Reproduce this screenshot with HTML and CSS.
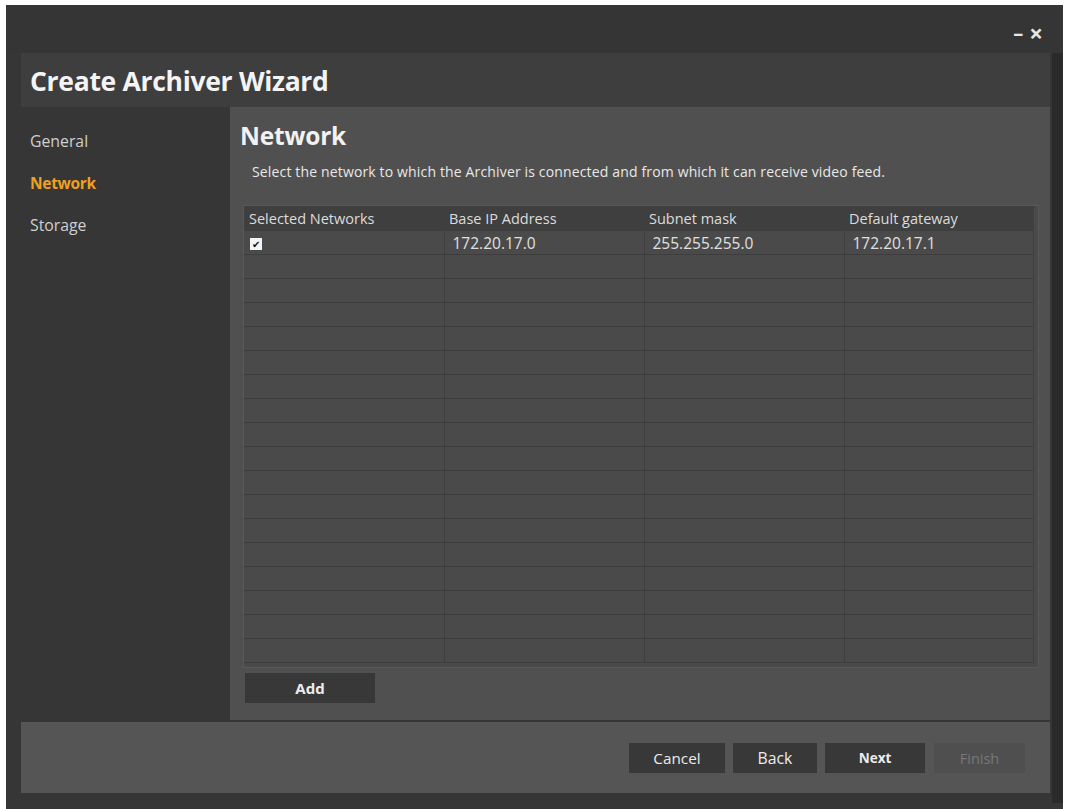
FILE: index.html
```html
<!doctype html>
<html>

	<head>
		<meta charset="utf-8">
		<title>Create Archiver Wizard</title>
		<link rel="stylesheet" href="styles.css">
	</head>

	<body>
		<div class="window">
			<!-- 标题栏 -->
			<div class="titlebar">
				<span class="ctl">&#8211;</span>
				<span class="ctl close">&#215;</span>
			</div>

			<div class="frame">
				<div class="inner">
					<div class="banner">Create Archiver Wizard</div>

					<div class="body">
						<ul class="steps">
							<li>General</li>
							<li class="active">Network</li>
							<li>Storage</li>
						</ul>

						<div class="panel">
							<h2>Network</h2>
							<p class="desc">Select the network to which the Archiver is connected and from which it can receive video feed.</p>

							<div class="grid">
								<table>
									<thead>
										<tr>
											<th>Selected Networks</th>
											<th>Base IP Address</th>
											<th>Subnet mask</th>
											<th>Default gateway</th>
										</tr>
									</thead>
									<tbody>
										<tr>
											<td><span class="check">&#10004;</span></td>
											<td>172.20.17.0</td>
											<td>255.255.255.0</td>
											<td>172.20.17.1</td>
										</tr>
										<tr><td></td><td></td><td></td><td></td></tr>
										<tr><td></td><td></td><td></td><td></td></tr>
										<tr><td></td><td></td><td></td><td></td></tr>
										<tr><td></td><td></td><td></td><td></td></tr>
										<tr><td></td><td></td><td></td><td></td></tr>
										<tr><td></td><td></td><td></td><td></td></tr>
										<tr><td></td><td></td><td></td><td></td></tr>
										<tr><td></td><td></td><td></td><td></td></tr>
										<tr><td></td><td></td><td></td><td></td></tr>
										<tr><td></td><td></td><td></td><td></td></tr>
										<tr><td></td><td></td><td></td><td></td></tr>
										<tr><td></td><td></td><td></td><td></td></tr>
										<tr><td></td><td></td><td></td><td></td></tr>
										<tr><td></td><td></td><td></td><td></td></tr>
										<tr><td></td><td></td><td></td><td></td></tr>
										<tr><td></td><td></td><td></td><td></td></tr>
										<tr><td></td><td></td><td></td><td></td></tr>
									</tbody>
								</table>
							</div>

							<button class="btn add">Add</button>
						</div>
					</div>

					<!-- 底部按钮 -->
					<div class="footer">
						<button class="btn cancel">Cancel</button>
						<button class="btn back">Back</button>
						<button class="btn next">Next</button>
						<button class="btn finish" disabled>Finish</button>
					</div>
				</div>
				<div class="scrollbar"></div>
			</div>
		</div>
	</body>

</html>
```

FILE: styles.css
```css
body {
	margin: 0;
	background: #fff;
	font-family: "Open Sans", "Liberation Sans", sans-serif;
}

.window {
	margin: 5px 0 0 6px;
	width: 1057px;
	height: 804px;
	background: #363636;
	display: flex;
	flex-direction: column;
}

.titlebar {
	height: 48px;
	display: flex;
	justify-content: flex-end;
	align-items: center;
	gap: 6px;
	padding: 8px 20px 0 0;
	box-sizing: border-box;
	background: #353535;
	color: #e6e6e6;
}

.ctl {
	font-size: 20px;
	font-weight: 700;
	line-height: 20px;
}

.close {
	font-size: 24px;
}

.frame {
	flex: 1;
	display: flex;
}

.inner {
	margin-left: 15px;
	width: 1029px;
	display: flex;
	flex-direction: column;
}

.scrollbar {
	width: 11px;
	margin-left: 2px;
	margin-bottom: 6px;
	background: #2a2a2a;
}

.banner {
	height: 54px;
	background: #3e3e3e;
	color: #f4f4f4;
	font-size: 26.5px;
	font-weight: 700;
	letter-spacing: -0.3px;
	line-height: 56px;
	padding-left: 9px;
}

.body {
	height: 613px;
	display: flex;
}

.steps {
	list-style: none;
	margin: 0;
	padding: 22px 0 0 9px;
	width: 200px;
}

.steps li {
	font-size: 15.8px;
	color: #cfcfcf;
	height: 42px;
	line-height: 24px;
}

.steps li.active {
	color: #f0a020;
	font-weight: 700;
	font-size: 15.5px;
	letter-spacing: -0.3px;
}

.panel {
	flex: 1;
	background: #505050;
	padding: 14px 0 0 13px;
	box-sizing: border-box;
}

.panel h2 {
	margin: 0 0 0 -3px;
	font-size: 24.5px;
	font-weight: 700;
	color: #f2f2f2;
	line-height: 30px;
	letter-spacing: -0.2px;
}

.desc {
	margin: 11px 0 0 9px;
	font-size: 14px;
	letter-spacing: 0.15px;
	color: #e8e8e8;
	line-height: 20px;
}

.grid {
	margin-top: 23px;
	width: 796px;
	height: 463px;
	box-sizing: border-box;
	border: 1px solid #585858;
	background: #4a4a4a;
	overflow: hidden;
}

.grid table {
	border-collapse: collapse;
	width: 790px;
	table-layout: fixed;
}

.grid th {
	height: 25px;
	background: #3f3f3f;
	color: #dcdcdc;
	font-size: 14.5px;
	font-weight: 400;
	text-align: left;
	padding: 0 0 0 5px;
	width: 195px;
}

.grid th:last-child {
	width: auto;
}

.grid td {
	height: 23px;
	padding: 0 0 0 8px;
	border-bottom: 1px solid #3d3d3d;
	border-right: 1px solid #3f3f3f;
	color: #e0e0e0;
	font-size: 15.5px;
}

.grid td:first-child {
	padding-left: 6px;
}

.check {
	display: inline-block;
	width: 12px;
	height: 12px;
	background: #f4f4f4;
	color: #111;
	font-size: 10px;
	line-height: 12px;
	text-align: center;
	vertical-align: middle;
}

.btn {
	font-family: "Open Sans", "Liberation Sans", sans-serif;
	border: none;
	background: #383838;
	color: #ececec;
	font-size: 15.3px;
	padding: 0;
	height: 30px;
}

.add {
	margin: 5px 0 0 2px;
	width: 130px;
	font-weight: 700;
	font-size: 15px;
}

.footer {
	margin-top: 2px;
	height: 71px;
	background: #555;
	display: flex;
	justify-content: flex-end;
	align-items: flex-start;
	gap: 8px;
	padding: 21px 25px 0 0;
	box-sizing: border-box;
}

.cancel {
	width: 96px;
}

.back {
	width: 84px;
	font-size: 15.8px;
}

.next {
	width: 100px;
	margin-right: 1px;
	font-weight: 700;
	font-size: 13.5px;
}

.finish {
	width: 91px;
	background: #4f4f4f;
	color: #777;
	font-size: 14.5px;
}
```
